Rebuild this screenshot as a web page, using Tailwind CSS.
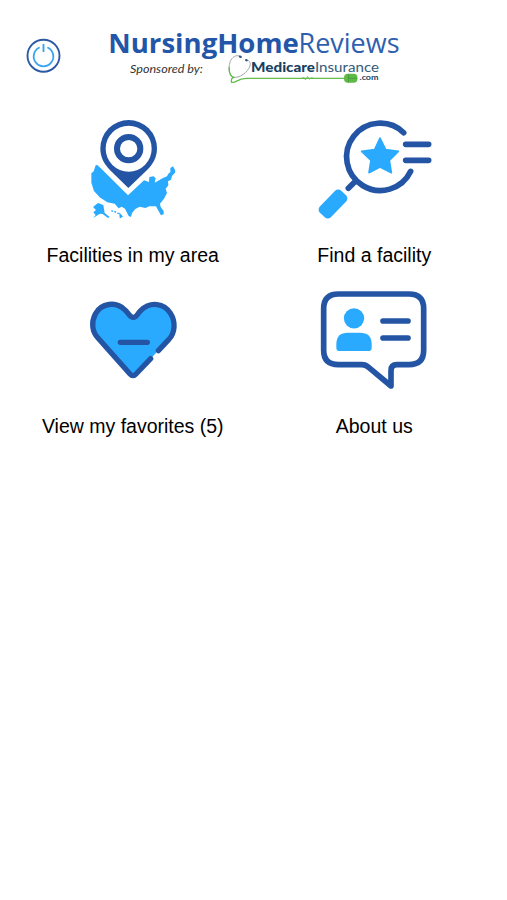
<!DOCTYPE html>
<html lang="en">

<head>
    <meta charset="UTF-8" />
    <meta name="viewport" content="width=device-width, initial-scale=1.0" />
    <title>Nursing Home Reviews</title>
    <script src="https://cdn.jsdelivr.net/npm/@tailwindcss/browser@4"></script>
</head>

<body class="min-h-screen bg-white font-['Liberation_Sans',sans-serif] text-black">
    <header class="flex h-[110px] pt-5 pl-[26px]">
        <!-- Power button -->
        <button class="mt-[18px] h-9 w-9" aria-label="Log out">
            <svg class="h-9 w-9" viewBox="0 0 36 36" fill="none" stroke-linecap="round">
                <circle cx="17.5" cy="17.7" r="16" stroke="#2b59a5" stroke-width="1.9" />
                <path d="M13 9.8a9.8 9.8 0 1 0 9 0" stroke="#3aa5ee" stroke-width="1.8" />
                <path d="M17.5 6.8v6.4" stroke="#3aa5ee" stroke-width="1.9" />
            </svg>
        </button>

        <!-- Logo -->
        <svg class="ml-[38px] h-[75px] w-[310px]" viewBox="100 20 310 75" fill="none">
            <text x="108.3" y="53" textLength="190.5" lengthAdjust="spacingAndGlyphs" class="fill-[#2356a8] font-['Open_Sans',sans-serif] text-[27.5px] font-bold">NursingHome</text>
            <text x="298.5" y="53" textLength="101" lengthAdjust="spacingAndGlyphs" class="fill-[#2f5fae] font-['Open_Sans',sans-serif] text-[27.5px]">Reviews</text>
            <text x="130" y="73" textLength="73" lengthAdjust="spacingAndGlyphs" class="fill-[#333333] font-[Lato,sans-serif] text-[11px] italic">Sponsored by:</text>
            <!-- Stethoscope -->
            <path d="M240 56.200C236 54.500 232 57 230 62C228 69 229 75 233 77C239 79 248 72 250 66C251 62 249 60 246 60" stroke="#a3a8a8" stroke-width="1" />
            <path d="M229.300 67C229 73 230 76 233.500 77.300C231 78.300 231 80 231.500 82.300C236 83.300 237 78.700 246 78.400H345" stroke="#62bd4c" stroke-width="1.300" />
            <path d="M239.800 56.500l1 .5M246 60l.8 .4" stroke="#30517f" stroke-width="2" stroke-linecap="round" />
            <path d="M302 78.400l2-1 1.500 2.500 2-3.500 2 3 2-2 2 1" stroke="#62bd4c" stroke-width=".8" />
            <rect x="344" y="73.800" width="13.500" height="9" rx="4" fill="#5fb946" />
            <path d="M348.500 74v8.500M348.500 78.300h8.500" stroke="#3e9436" stroke-width=".7" />
            <text x="251" y="72" textLength="64" lengthAdjust="spacingAndGlyphs" class="fill-[#173f61] font-[Lato,sans-serif] text-[13px] font-black">Medicare</text>
            <text x="315" y="72" textLength="64" lengthAdjust="spacingAndGlyphs" class="fill-[#355b78] font-[Lato,sans-serif] text-[13px]">Insurance</text>
            <text x="359.500" y="79.700" textLength="19" lengthAdjust="spacingAndGlyphs" class="fill-[#173f61] font-[Lato,sans-serif] text-[8px] font-bold">.com</text>
        </svg>
    </header>

    <main class="grid grid-cols-2 gap-y-[13px] px-3 text-center text-[19.5px] leading-6">
        <a class="flex flex-col items-center">
            <svg class="h-[120px] w-[120px]" viewBox="-7 0 360 360">
                <path d="M66 165L78 176L158 256L206 211L221 216L222 201L235 199L241 205L238 218L263 204L275 199L280 190L285 187L285 174L293 169L299 180L300 187L290 198L287 209L278 214L279 226L271 236L275 249L266 266L254 281L256 291L265 303L265 313L257 316L248 300L242 289L222 289L210 294L193 290L180 297L170 309L167 321L160 318L149 296L139 290L130 295L118 281L96 277L73 262L56 243L48 218L48 190L55 184L61 166Z" fill="#2aaaff" />
                <path d="M53 291L68 279L84 285L88 309L103 321L98 324L82 312L74 311L53 324L61 315L54 307L62 300Z" fill="#2aaaff" />
                <path d="M108 302l5 2M117 304l5 3M126 309l5 2M134 313l6 6-5 3Z" fill="#2aaaff" stroke="#2aaaff" stroke-width="4" />
                <!-- Pin -->
                <path d="M160 30A85 85 0 0 0 75 115C75 143 87 163 103 179L159 234L216 179C233 162 245 142 245 115A85 85 0 0 0 160 30Z" fill="#2455a5" />
                <circle cx="160" cy="116" r="69" fill="#fff" />
                <circle cx="160" cy="116" r="35" fill="none" stroke="#2455a5" stroke-width="18" />
            </svg>
            <span class="mt-[13px]">Facilities in my area</span>
        </a>

        <a class="flex flex-col items-center">
            <svg class="h-[120px] w-[140px]" viewBox="-2 0 420 360" fill="none" stroke="#2455a5" stroke-width="17" stroke-linecap="round">
                <path d="M297 68A101 101 0 1 0 318 184M150 216L131 235M303 103H372M303 151H372" />
                <path d="M226 84L243 119L281 124L254 151L260 188L226 171L193 188L199 151L171 124L210 119Z" fill="#2aaaff" stroke="#2aaaff" stroke-width="5" stroke-linejoin="round" />
                <rect x="39" y="259" width="92" height="46" rx="13" transform="rotate(-46 85 282)" fill="#2aaaff" stroke="none" />
            </svg>
            <span class="mt-[13px]">Find a facility</span>
        </a>

        <a class="flex flex-col items-center">
            <svg class="h-[120px] w-[120px]" viewBox="-5 -30 360 360" stroke-linecap="round" stroke-linejoin="round">
                <path d="M176 82C166 82 164 72 151 60C124 32 79 40 62 72C49 97 52 125 70 144L166 252Q175 262 184 252L282 149C302 129 303 95 288 71C269 38 226 34 198 62C186 74 186 82 176 82Z" fill="#2aaaff" />
                <path d="M251 182L282 149C302 129 303 95 288 71C269 38 226 34 198 62C186 74 186 82 176 82C166 82 164 72 151 60C124 32 79 40 62 72C49 97 52 125 70 144L166 252Q175 262 184 252L228 206M137 157H218" fill="none" stroke="#2455a5" stroke-width="16" />
            </svg>
            <span class="mt-3.5">View my favorites (5)</span>
        </a>

        <a class="flex flex-col items-center">
            <svg class="h-[120px] w-[140px]" viewBox="-2 0 420 360" fill="none" stroke="#2455a5" stroke-width="17" stroke-linecap="round" stroke-linejoin="round">
                <path d="M101 42H313Q357 42 357 86V211Q357 254 313 254H277Q259 254 259 272V318L192 262Q183 254 171 254H101Q57 254 57 211V86Q57 42 101 42ZM235 123H310M235 174H310" />
                <circle cx="148" cy="115" r="30.500" fill="#2aaaff" stroke="none" />
                <path d="M95 203V192Q95 158 130 158H166Q201 158 201 192V203Q201 213 191 213H105Q95 213 95 203Z" fill="#2aaaff" stroke="none" />
            </svg>
            <span class="mt-3.5">About us</span>
        </a>
    </main>
</body>

</html>
